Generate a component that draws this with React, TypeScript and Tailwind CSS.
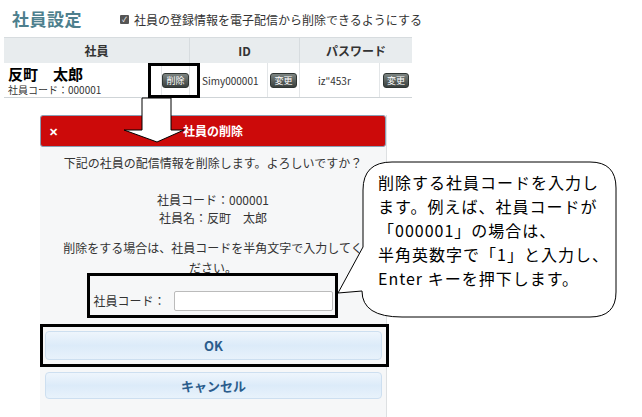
import React from 'react';

const jp = { fontFamily: '"Noto Sans CJK JP", "Noto Sans", sans-serif' };

function DarkButton({ label }: { label: string }) {
  return (
    <span className="inline-flex h-[15px] items-center rounded-[3px] border border-[#2f3533] bg-gradient-to-b from-[#7d8582] to-[#3a403e] px-[3px] text-[9px] leading-none text-white">
      {label}
    </span>
  );
}

export default function App() {
  return (
    <div className="relative h-[417px] w-[642px] overflow-hidden bg-white text-[#333]" style={jp}>
      {/* title row */}
      <div className="flex h-[37px] items-center pl-[12px]">
        <div className="text-[17px] font-bold tracking-[0.5px] text-[#4d7f8d]">社員設定</div>
        <div className="ml-[38px] flex items-center gap-[5px] pt-[2px] text-[12px] text-[#333]">
          <span className="flex h-[9px] w-[9px] items-center justify-center rounded-[1px] bg-[#555] text-[7px] leading-none text-white">✓</span>
          社員の登録情報を電子配信から削除できるようにする
        </div>
      </div>

      {/* table */}
      <div className="ml-[4px] grid w-[408px] grid-cols-[158px_28px_78px_32px_80px_32px] border-b border-[#cfd4d7] text-[10px]">
        <div className="col-span-2 flex h-[26px] items-center justify-center border-r border-t border-[#d7dcdf] bg-[#e8ecee] text-[12px] font-bold">社員</div>
        <div className="col-span-2 flex h-[26px] items-center justify-center border-r border-t border-[#d7dcdf] bg-[#e8ecee] text-[12px] font-bold">ID</div>
        <div className="col-span-2 flex h-[26px] items-center justify-center border-t border-[#d7dcdf] bg-[#e8ecee] text-[12px] font-bold">パスワード</div>

        <div className="flex h-[34px] flex-col justify-center border-r border-[#e3e6e8] pl-[4px]">
          <div className="text-[15px] font-bold leading-[19px] text-black">反町　太郎</div>
          <div className="text-[10px] leading-[13px]">社員コード：000001</div>
        </div>
        <div className="flex items-center justify-center border-r border-[#e3e6e8]">
          <DarkButton label="削除" />
        </div>
        <div className="flex items-center border-r border-[#e3e6e8] pl-[12px]">Simy000001</div>
        <div className="flex items-center justify-center border-r border-[#e3e6e8]">
          <DarkButton label="変更" />
        </div>
        <div className="flex items-center border-r border-[#e3e6e8] pl-[18px]">iz"453r</div>
        <div className="flex items-center justify-center">
          <DarkButton label="変更" />
        </div>
      </div>

      {/* modal */}
      <div className="ml-[40px] mt-[17px] w-[347px] border-r border-[#dde0e2] bg-[#f6f7f8] pb-[20px]">
        <div className="relative flex h-[32px] items-center justify-center rounded-[3px] border border-[#8a9fb5] bg-[#cc0a0a] text-[12px] font-bold text-white">
          <span className="absolute left-[8px] text-[11px]">✕</span>
          社員の削除
        </div>
        <div className="px-[22px] text-center text-[12px] leading-[18px]">
          <div className="mt-[7px]">下記の社員の配信情報を削除します。よろしいですか？</div>
          <div className="mt-[19px]">社員コード：000001</div>
          <div>社員名：反町　太郎</div>
          <div className="mt-[11px] leading-[20px]">削除をする場合は、社員コードを半角文字で入力してください。</div>
          <div className="mt-[13px] flex items-center justify-center gap-[8px]">
            <span>社員コード：</span>
            <span className="h-[20px] w-[159px] rounded-[2px] border border-[#bbb] bg-white" />
          </div>
        </div>
        <div className="mt-[20px] flex flex-col gap-[12px] pl-[5px] pr-[4px]">
          <div className="flex h-[29px] items-center justify-center rounded-[4px] border border-[#cddff0] bg-gradient-to-b from-[#eef5fc] via-[#dcebf9] to-[#e8f2fb] text-[13px] font-bold text-[#2b5c8c]">OK</div>
          <div className="flex h-[27px] items-center justify-center rounded-[4px] border border-[#cddff0] bg-gradient-to-b from-[#eef5fc] via-[#dcebf9] to-[#e8f2fb] text-[13px] font-bold text-[#2b5c8c]">キャンセル</div>
        </div>
      </div>

      {/* annotation boxes */}
      <div className="absolute left-[148px] top-[63px] h-[35px] w-[52px] border-[3px] border-black" />
      <div className="absolute left-[87px] top-[273px] h-[45px] w-[251px] border-[3px] border-black" />
      <div className="absolute left-[40px] top-[324px] h-[43px] w-[349px] border-[3px] border-black" />

      {/* arrow and callout */}
      <svg className="pointer-events-none absolute left-0 top-0" width="642" height="417" viewBox="0 0 642 417">
        <polygon points="142,98 171,98 171,130 184,130 157,142 124,130 142,130" fill="white" stroke="black" strokeWidth="1" />
        <path
          d="M 392 162 H 590 Q 616 162 616 188 V 292 Q 616 317 590 317 H 402 Q 362 317 362 291 L 338 293 L 363 247 V 190 Q 363 162 392 162 Z"
          fill="white"
          stroke="black"
          strokeWidth="1"
        />
      </svg>
      <div className="absolute left-[378px] top-[170px] text-[16px] leading-[24px] tracking-[1px] text-black">
        <div>削除する社員コードを入力し</div>
        <div>ます。例えば、社員コードが</div>
        <div>「000001」の場合は、</div>
        <div>半角英数字で「1」と入力し、</div>
        <div>Enter キーを押下します。</div>
      </div>
    </div>
  );
}
